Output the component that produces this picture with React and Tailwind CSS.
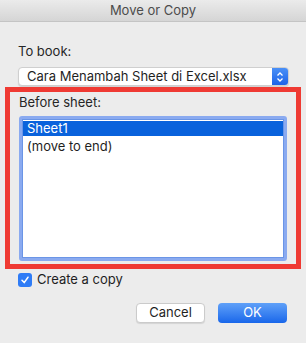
import React from "react";

export default function App() {
  return (
    <div className="w-[306px] h-[343px] bg-[#ececec] flex flex-col text-[13px] text-[#262626]" style={{ fontFamily: "Inter, 'Liberation Sans', sans-serif" }}>
      <div className="h-[22px] shrink-0 flex items-center justify-center bg-gradient-to-b from-[#ebebeb] to-[#d5d5d5] border-b border-[#c4c4c4] text-[#4c4c4c]">
        Move or Copy
      </div>

      <div className="pl-[18px] pr-[17px] pt-[23px]">
        <div className="leading-[13px]">To book:</div>
        <div className="mt-[9px] h-[19px] flex rounded-[4px] bg-white border border-[#cfcfcf] shadow-[0_1px_1px_rgba(0,0,0,0.12)] overflow-hidden">
          <div className="flex-1 pl-[8px] leading-[17px] text-[#1f1f1f]">Cara Menambah Sheet di Excel.xlsx</div>
          <div className="w-[16px] bg-gradient-to-b from-[#4a90f7] to-[#1d62e8] flex items-center justify-center">
            <svg width="8" height="12" viewBox="0 0 8 12" fill="none" stroke="white" strokeWidth="1.3">
              <path d="M1.5 4.5 L4 2 L6.5 4.5" />
              <path d="M1.5 7.5 L4 10 L6.5 7.5" />
            </svg>
          </div>
        </div>
      </div>

      <div className="mx-[5px] mt-[1px] h-[182px] border-[5px] border-[#ef3a33] px-[9px]">
        <div className="leading-[20px]">Before sheet:</div>
        <div className="mt-[4px] h-[145px] rounded-[3px] border-[3px] border-[#8aaaf0] bg-white shadow-[inset_0_0_0_1px_#6b95e6]">
          <div className="mx-[1px] mt-[2px] h-[15px] bg-[#0962dc] text-white pl-[4px] leading-[15px]">Sheet1</div>
          <div className="mx-[1px] h-[20px] pl-[4px] leading-[20px] text-[#1f1f1f]">(move to end)</div>
        </div>
      </div>

      <div className="pl-[18px] mt-[4px] flex items-center gap-[5px] h-[14px]">
        <div className="w-[14px] h-[14px] rounded-[3px] bg-[#2f7cf6] flex items-center justify-center">
          <svg width="10" height="10" viewBox="0 0 10 10" fill="none" stroke="white" strokeWidth="1.5" strokeLinecap="round" strokeLinejoin="round">
            <path d="M2 5.3 L4.2 7.6 L8 2.2" />
          </svg>
        </div>
        <span className="text-[#1f1f1f]">Create a copy</span>
      </div>

      <div className="flex justify-end gap-[13px] pr-[19px] mt-[16px]">
        <div className="w-[69px] h-[20px] rounded-[4px] bg-white border border-[#cbcbcb] shadow-[0_1px_1px_rgba(0,0,0,0.1)] flex items-center justify-center text-[#1f1f1f]">
          Cancel
        </div>
        <div className="w-[69px] h-[20px] rounded-[4px] bg-gradient-to-b from-[#5fa0f8] to-[#1766ea] flex items-center justify-center text-white">
          OK
        </div>
      </div>
    </div>
  );
}
